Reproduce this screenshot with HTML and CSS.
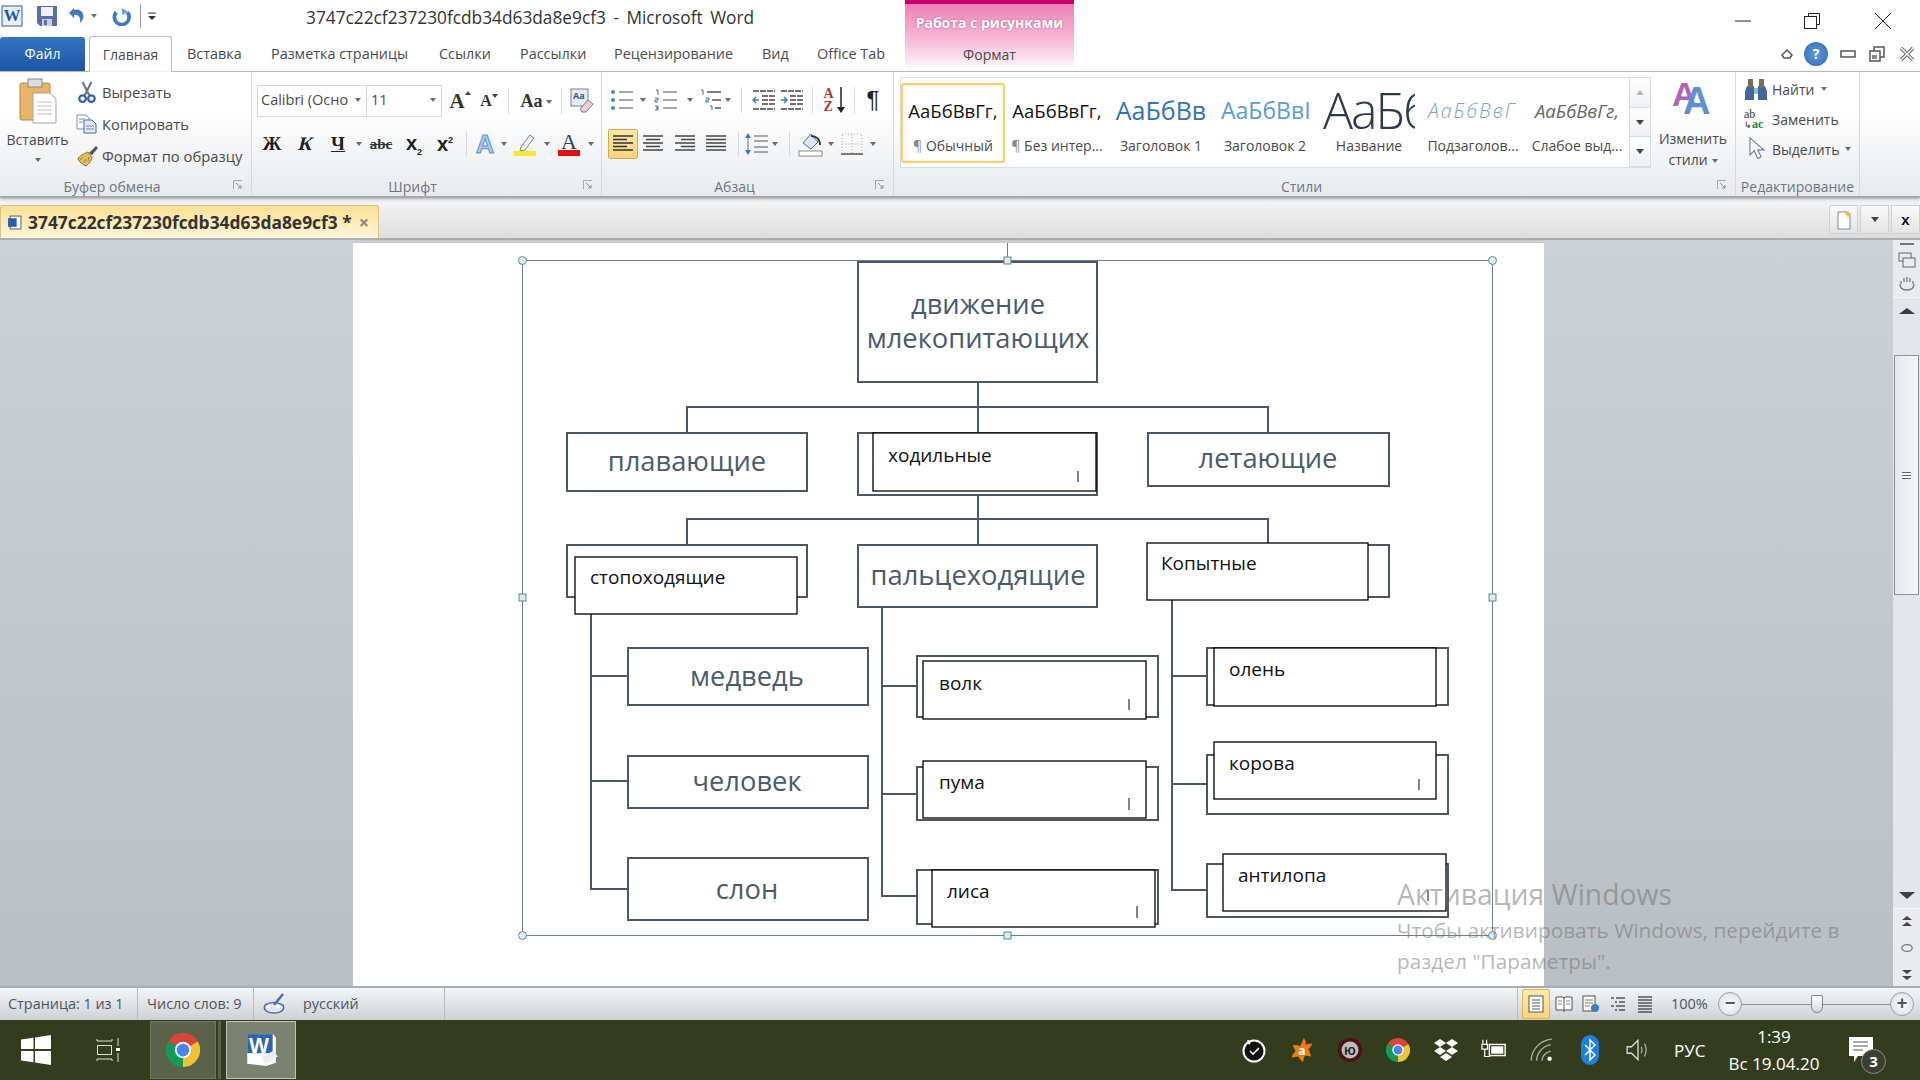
FILE: index.html
```html
<!DOCTYPE html>
<html lang="ru">
  <head>
    <meta charset="utf-8" />
    <title>3747c22cf237230fcdb34d63da8e9cf3 - Microsoft Word</title>
    <link rel="stylesheet" href="styles.css">
  </head>

  <body>
    <svg class="defs" width="0" height="0">
      <symbol id="bullets" viewBox="0 0 24 24"><g stroke="#555" stroke-width="1.2"><path d="M9 4h14M9 12h14M9 20h14"/></g><g fill="#4a86c8"><circle cx="3" cy="4" r="2"/><circle cx="3" cy="12" r="2"/><circle cx="3" cy="20" r="2"/></g></symbol>
      <symbol id="numbers" viewBox="0 0 24 24"><path d="M9 4h14M9 12h14M9 20h14" stroke="#555" stroke-width="1.2"/><path d="M2 2h2v5M1 10h3v2H1v2h3M1 18h3v2H2h2v2H1" stroke="#3b6fb0" fill="none"/></symbol>
      <symbol id="multi" viewBox="0 0 24 24"><path d="M8 4h14M13 12h9M16 20h6" stroke="#555" stroke-width="1.3"/><path d="M2 2h2v5M7 10h3v2H7v2h3M11 18h2v4" stroke="#3b6fb0" fill="none"/></symbol>
      <symbol id="outdent" viewBox="0 0 24 24"><path d="M1 3h22M10 8h13M10 12h13M10 16h13M1 21h22" stroke="#444" stroke-width="1.6" stroke-dasharray="6 1"/><path d="M7 12H1m3-3-3 3 3 3" stroke="#3b78c0" fill="none" stroke-width="1.5"/></symbol>
      <symbol id="indent" viewBox="0 0 24 24"><path d="M1 3h22M10 8h13M10 12h13M10 16h13M1 21h22" stroke="#444" stroke-width="1.6" stroke-dasharray="6 1"/><path d="M1 12h6m-3-3 3 3-3 3" stroke="#3b78c0" fill="none" stroke-width="1.5"/></symbol>
      <symbol id="al-left" viewBox="0 0 22 20"><path d="M1 2h20M1 5.500h14M1 9h20M1 12.500h14M1 16h20" stroke="#333" stroke-width="1.300"/></symbol>
      <symbol id="al-center" viewBox="0 0 22 20"><path d="M1 2h20M4 5.500h14M1 9h20M4 12.500h14M1 16h20" stroke="#444" stroke-width="1.300"/></symbol>
      <symbol id="al-right" viewBox="0 0 22 20"><path d="M1 2h20M7 5.500h14M1 9h20M7 12.500h14M1 16h20" stroke="#444" stroke-width="1.300"/></symbol>
      <symbol id="al-just" viewBox="0 0 22 20"><path d="M1 2h20M1 5.500h20M1 9h20M1 12.500h20M1 16h20" stroke="#444" stroke-width="1.300"/></symbol>
      <symbol id="launcher" viewBox="0 0 10 10"><path d="M.5 9V.5H9" stroke="#a3a8ad" fill="none"/><path d="M3 3l5 5M8 5v3H5" stroke="#8a9096" fill="none"/></symbol>
      <symbol id="chrome" viewBox="-24 -24 48 48"><path d="M0 0-20.800-12A24 24 0 0 1 20.800-12Z" fill="#db4437"/><path d="M0 0-20.800-12A24 24 0 0 1 20.800-12Z" fill="#f2c230" transform="rotate(120)"/><path d="M0 0-20.800-12A24 24 0 0 1 20.800-12Z" fill="#0f9d58" transform="rotate(240)"/><circle r="11.500" fill="#fff"/><circle r="9" fill="#4a84ee"/></symbol>
    </svg>

    <div class="top">
      <div class="top-left">
        <div class="titlebar">
          <svg class="qat-word" viewBox="0 0 22 22"><rect x="1" y="1" width="20" height="20" fill="#e8f0fa" stroke="#2a5ea8"/><text x="11" y="16" class="logo-w">W</text></svg>
          <svg class="qat-save" viewBox="0 0 22 22"><path d="M1 1h20v20H4l-3-3z" fill="#5b6ea8"/><rect x="5" y="2" width="12" height="9" fill="#eef1f7"/><rect x="6" y="14" width="10" height="7" fill="#c7cee0"/><rect x="8" y="15" width="3" height="5" fill="#5b6ea8"/></svg>
          <svg class="qat-undo" viewBox="0 0 18 18"><path d="M6 3C12 1 17 6 15 12c-1 2-2 3-3 4 1-5-1-9-6-8v3L1 6l5-5z" fill="#3f78c4"/></svg>
          <i class="dd dd-undo"></i>
          <svg class="qat-redo" viewBox="0 0 18 18"><path d="M4 5A7 7 0 1 0 14.500 5" fill="none" stroke="#3f78c4" stroke-width="3.500"/><path d="M9 1l6 3-5 4z" fill="#6fa4e0"/></svg>
          <span class="qat-sep"></span>
          <svg class="qat-more" viewBox="0 0 10 10"><path d="M1 2h8" stroke="#333"/><path d="M1 5h8L5 9z" fill="#333"/></svg>
          <span class="doc-title">3747c22cf237230fcdb34d63da8e9cf3 - Microsoft Word</span>
        </div>
        <div class="tabs">
          <span class="tab-file">Файл</span>
          <span class="tab tab-active">Главная</span>
          <span class="tab t-ins">Вставка</span>
          <span class="tab t-lay">Разметка страницы</span>
          <span class="tab t-ref">Ссылки</span>
          <span class="tab t-mail">Рассылки</span>
          <span class="tab t-rev">Рецензирование</span>
          <span class="tab t-view">Вид</span>
          <span class="tab t-office">Office Tab</span>
        </div>
      </div>
      <div class="ctx">
        <div class="ctx-title">Работа с рисунками</div>
        <div class="ctx-tab">Формат</div>
      </div>
      <div class="top-right">
        <div class="win-ctrl">
          <svg class="w-min" viewBox="0 0 16 16"><path d="M0 8h16" stroke="#222"/></svg>
          <svg class="w-max" viewBox="0 0 16 16"><path d="M4.500 3.500V.5h11v11h-3" stroke="#222" fill="none"/><rect x=".5" y="3.500" width="12" height="12" fill="none" stroke="#222"/></svg>
          <svg class="w-close" viewBox="0 0 16 16"><path d="M0 0l16 16M16 0 0 16" stroke="#222"/></svg>
        </div>
        <div class="doc-ctrl">
          <svg class="d-icon" viewBox="0 0 14 14"><path d="M7 3l5 5-2 3H4L2 8z" fill="#fff" stroke="#555" stroke-width="1.500"/></svg>
          <span class="help">?</span>
          <svg class="d-icon d-min" viewBox="0 0 16 14"><rect x="1" y="4" width="14" height="6" fill="#fff" stroke="#555" stroke-width="1.500"/></svg>
          <svg class="d-icon d-rest" viewBox="0 0 16 16"><rect x="5" y="1" width="10" height="10" fill="#fff" stroke="#555" stroke-width="1.500"/><rect x="1" y="5" width="10" height="10" fill="#fff" stroke="#555" stroke-width="1.500"/><rect x="3" y="9" width="5" height="4" fill="#888"/></svg>
          <svg class="d-icon d-close" viewBox="0 0 16 16"><path d="M2 2l12 12M14 2 2 14" stroke="#666" stroke-width="3.500"/><path d="M2 2l12 12M14 2 2 14" stroke="#fff" stroke-width="1.500"/></svg>
        </div>
      </div>
    </div>

    <div class="ribbon">
      <div class="group g-clip">
        <div class="group-body clip-body">
          <div class="paste">
            <svg class="paste-icon" viewBox="0 0 38 46"><rect x="1" y="5" width="30" height="37" rx="2" fill="#e9b562" stroke="#a98a5a"/><rect x="9" y="1" width="14" height="8" fill="#ddd" stroke="#888"/><path d="M14 15h17l6 6v24H14z" fill="#fff" stroke="#9aa3ad"/><path d="M18 24h15M18 28h15M18 32h15M18 36h15" stroke="#b9c0c8"/></svg>
            <span>Вставить</span>
            <i class="dd"></i>
          </div>
          <div class="clip-list">
            <div class="clip-row"><svg viewBox="0 0 16 20"><path d="M4 1l6 12M12 1 6 13" stroke="#6d7784" stroke-width="2"/><circle cx="4" cy="16" r="3" fill="none" stroke="#2d62ae" stroke-width="2"/><circle cx="12" cy="16" r="3" fill="none" stroke="#2d62ae" stroke-width="2"/></svg>Вырезать</div>
            <div class="clip-row"><svg viewBox="0 0 22 20"><path d="M1 1h9l3 3v11H1z" fill="#fff" stroke="#7e8fa8"/><path d="M8 6h8l4 4v9H8z" fill="#dfe9f6" stroke="#3f6fae"/><path d="M3 5h6M3 8h4M10 12h8M10 15h8" stroke="#7a8ba3"/></svg>Копировать</div>
            <div class="clip-row"><svg viewBox="0 0 22 22"><path d="M12 7c-5 2-9 4-10 7 1 3 5 6 8 7 3-2 6-6 6-9z" fill="#e5bd5a" stroke="#8b7234"/><path d="M7 12l-3 3M10 14l-2 4M13 12l-1 4" stroke="#9a7f35"/><path d="M13 8l7-7 2 2-6 7z" fill="#555"/></svg>Формат по образцу</div>
          </div>
        </div>
        <div class="group-label lb-clip">Буфер обмена<svg class="launcher" viewBox="0 0 10 10"><use href="#launcher"/></svg></div>
      </div>

      <div class="group g-font">
        <div class="group-body">
          <div class="row f-row1">
            <div class="combo combo-font">Calibri (Осно<i class="dd"></i></div>
            <div class="combo combo-size">11<i class="dd"></i></div>
            <span class="ico-a ico-a-big">A<i class="up"></i></span>
            <span class="ico-a ico-a-small">A<i class="down"></i></span>
            <span class="rsep"></span>
            <span class="ico-aa">Aa<i class="dd"></i></span>
            <span class="rsep"></span>
            <svg class="ic-26" viewBox="0 0 26 26"><rect x="2" y="1" width="17" height="17" fill="#e3eaf3" stroke="#6f849d"/><text x="4" y="11" class="mini-aa">Aa</text><path d="M11 21l8-9 5 4-7 8h-4z" fill="#f1ccd3" stroke="#6d8098"/></svg>
          </div>
          <div class="row f-row2">
            <b class="fmt-b">Ж</b>
            <b class="fmt-i">К</b>
            <b class="fmt-u">Ч</b>
            <i class="dd"></i>
            <span class="fmt-s">abc</span>
            <span class="fmt-x">x<sub>2</sub></span>
            <span class="fmt-x">x<sup>2</sup></span>
            <span class="rsep"></span>
            <span class="fx-a">A</span>
            <i class="dd"></i>
            <svg class="ic-26" viewBox="0 0 26 26"><path d="M9 16 18 4l4 3-9 12-5 1z" fill="#eee" stroke="#7a8796"/><rect x="2" y="20" width="22" height="5" fill="#f6e82c"/></svg>
            <i class="dd"></i>
            <svg class="ic-26" viewBox="0 0 26 26"><text x="13" y="18" class="color-a">A</text><rect x="2" y="19" width="22" height="6" fill="#e01010"/></svg>
            <i class="dd"></i>
          </div>
        </div>
        <div class="group-label lb-font">Шрифт<svg class="launcher" viewBox="0 0 10 10"><use href="#launcher"/></svg></div>
      </div>

      <div class="group g-para">
        <div class="group-body">
          <div class="row p-row1">
            <svg class="ic-24"><use href="#bullets"/></svg><i class="dd"></i>
            <svg class="ic-24"><use href="#numbers"/></svg><i class="dd"></i>
            <svg class="ic-24"><use href="#multi"/></svg><i class="dd"></i>
            <span class="rsep"></span>
            <svg class="ic-24"><use href="#outdent"/></svg>
            <svg class="ic-24"><use href="#indent"/></svg>
            <span class="rsep"></span>
            <span class="sort"><span>A<br>Z</span><svg viewBox="0 0 8 26"><path d="M4 0v22" stroke="#222" stroke-width="1.500"/><path d="M0 20h8l-4 6z" fill="#222"/></svg></span>
            <span class="rsep"></span>
            <span class="pilcrow">¶</span>
          </div>
          <div class="row p-row2">
            <span class="al-on"><svg class="ic-22"><use href="#al-left"/></svg></span>
            <svg class="ic-22"><use href="#al-center"/></svg>
            <svg class="ic-22"><use href="#al-right"/></svg>
            <svg class="ic-22"><use href="#al-just"/></svg>
            <span class="rsep"></span>
            <svg class="ic-24" viewBox="0 0 24 24"><path d="M10 4h14M10 9h14M10 15h14M10 20h14" stroke="#555" stroke-width="1.200"/><path d="M4 1 1 6h6zM4 23l-3-5h6z" fill="#3b78c0"/><path d="M4 6v12" stroke="#3b78c0"/></svg>
            <i class="dd"></i>
            <span class="rsep"></span>
            <svg class="ic-26" viewBox="0 0 26 26"><path d="M5 12l8-9 7 8-7 7z" fill="#dde6f2" stroke="#3f6fae"/><path d="M13 5c5 0 9 3 9 9" stroke="#333" fill="none" stroke-width="2"/><rect x="1" y="20" width="23" height="5" fill="#fff" stroke="#888"/></svg>
            <i class="dd"></i>
            <svg class="ic-26" viewBox="0 0 26 26"><rect x="3" y="3" width="20" height="20" fill="none" stroke="#aaa" stroke-dasharray="1 2"/><path d="M3 13h20M13 3v20" stroke="#aaa" stroke-dasharray="1 2"/><path d="M2 23h22" stroke="#555" stroke-width="1.500"/></svg>
            <i class="dd"></i>
          </div>
        </div>
        <div class="group-label lb-para">Абзац<svg class="launcher" viewBox="0 0 10 10"><use href="#launcher"/></svg></div>
      </div>

      <div class="group g-styles">
        <div class="group-body styles-body">
          <div class="gallery">
            <div class="style style-on"><div class="sample s-normal">АаБбВвГг,</div><div class="style-name"><em>¶</em> Обычный</div></div>
            <div class="style"><div class="sample s-normal">АаБбВвГг,</div><div class="style-name"><em>¶</em> Без интер...</div></div>
            <div class="style"><div class="sample s-h1">АаБбВв</div><div class="style-name">Заголовок 1</div></div>
            <div class="style"><div class="sample s-h2">АаБбВвІ</div><div class="style-name">Заголовок 2</div></div>
            <div class="style"><div class="sample s-title">АаБбВ</div><div class="style-name">Название</div></div>
            <div class="style"><div class="sample s-sub">АаБбВвГ</div><div class="style-name">Подзаголов...</div></div>
            <div class="style"><div class="sample s-weak">АаБбВвГг,</div><div class="style-name">Слабое выд...</div></div>
            <div class="gal-scroll">
              <span class="gal-btn"><i class="up-dim"></i></span>
              <span class="gal-btn"><i class="dd-dark"></i></span>
              <span class="gal-btn gal-more"><i class="dd-dark"></i></span>
            </div>
          </div>
          <div class="change-styles">
            <svg viewBox="0 0 44 42"><text x="1" y="30" class="big-a1">A</text><text x="12" y="38" class="big-a2">A</text></svg>
            <span>Изменить</span>
            <span>стили<i class="dd"></i></span>
          </div>
        </div>
        <div class="group-label lb-styles">Стили<svg class="launcher" viewBox="0 0 10 10"><use href="#launcher"/></svg></div>
      </div>

      <div class="group g-edit">
        <div class="group-body edit-body">
          <div class="edit-row"><svg viewBox="0 0 24 24"><path d="M3 9h7v14H1V14zM14 9h7l2 5v9h-9z" fill="#41689c"/><rect x="4" y="2" width="5" height="8" fill="#7a6d4f"/><rect x="15" y="2" width="5" height="8" fill="#7a6d4f"/><rect x="10" y="11" width="4" height="6" fill="#9db7d8"/></svg>Найти<i class="dd"></i></div>
          <div class="edit-row"><span class="ab-ac"><span>ab</span><span><em>↳</em><b>ac</b></span></span>Заменить</div>
          <div class="edit-row"><svg class="cursor" viewBox="0 0 24 28"><path d="M5 1v20l5-5 4 9 4-2-4-8h7z" fill="#fff" stroke="#6d7c8f" stroke-width="1.300"/></svg>Выделить<i class="dd"></i></div>
        </div>
        <div class="group-label">Редактирование</div>
      </div>
    </div>

    <div class="docbar">
      <div class="doc-tab">
        <svg viewBox="0 0 14 14"><rect x="3" y="1" width="10" height="12" fill="#fff" stroke="#667"/><rect x="1" y="3" width="8" height="8" fill="#2a5ea8"/></svg>
        <b>3747c22cf237230fcdb34d63da8e9cf3 *</b>
        <span class="doc-tab-x">×</span>
      </div>
      <div class="doc-btns">
        <span class="doc-btn"><svg viewBox="0 0 16 20"><path d="M2 2h9l3 3v14H2z" fill="#fff" stroke="#7b8797"/><path d="M12 0l1 3 3 1-3 1-1 3-1-3-3-1 3-1z" fill="#f2b531"/></svg></span>
        <span class="doc-btn"><i class="dd-dark"></i></span>
        <span class="doc-btn doc-btn-x">x</span>
      </div>
    </div>

    <div class="workspace">
      <div class="page">
        <svg class="diagram" viewBox="353 240 1191 746">
          <path class="conn" d="M978 382V433M687 433V407H1268V433M978 495V545M687 545V519H1268V545"/>
          <path class="conn" d="M591 614V889H627M591 676H627M591 781H627M882 607V896H917M882 686H917M882 794H917M1172 600V890H1207M1172 676H1207M1172 784H1207"/>

          <rect class="bx" x="858" y="262" width="239" height="120"/>
          <rect class="bx" x="567" y="433" width="240" height="58"/>
          <rect class="bx" x="858" y="433" width="239" height="62"/>
          <rect class="bx" x="1148" y="433" width="241" height="53"/>
          <rect class="bx" x="567" y="545" width="240" height="52"/>
          <rect class="bx" x="858" y="545" width="239" height="62"/>
          <rect class="bx" x="1148" y="545" width="241" height="52"/>
          <rect class="bx" x="628" y="648" width="240" height="57"/>
          <rect class="bx" x="628" y="756" width="240" height="52"/>
          <rect class="bx" x="628" y="858" width="240" height="62"/>
          <rect class="bx" x="917" y="656" width="241" height="61"/>
          <rect class="bx" x="917" y="767" width="241" height="53"/>
          <rect class="bx" x="917" y="870" width="241" height="54"/>
          <rect class="bx" x="1207" y="648" width="241" height="57"/>
          <rect class="bx" x="1207" y="755" width="241" height="59"/>
          <rect class="bx" x="1207" y="864" width="241" height="53"/>

          <rect class="ov" x="873" y="433" width="223" height="58"/>
          <rect class="ov" x="575" y="557" width="222" height="57"/>
          <rect class="ov" x="1147" y="543" width="221" height="57"/>
          <rect class="ov" x="923" y="661" width="223" height="58"/>
          <rect class="ov" x="923" y="761" width="223" height="57"/>
          <rect class="ov" x="932" y="870" width="223" height="57"/>
          <rect class="ov" x="1214" y="648" width="222" height="58"/>
          <rect class="ov" x="1214" y="742" width="222" height="57"/>
          <rect class="ov" x="1223" y="854" width="223" height="57"/>

          <path class="caret" d="M1078 471V482M1129 699V710M1129 798V810M1137 906V918M1419 779V790M1428 890V901"/>

          <text class="lbl" x="978" y="314">движение</text>
          <text class="lbl" x="978" y="348">млекопитающих</text>
          <text class="lbl" x="687" y="471">плавающие</text>
          <text class="lbl" x="1268" y="468">летающие</text>
          <text class="lbl" x="978" y="585">пальцеходящие</text>
          <text class="lbl" x="747" y="686">медведь</text>
          <text class="lbl" x="747" y="791">человек</text>
          <text class="lbl" x="747" y="899">слон</text>

          <text class="small" x="888" y="462">ходильные</text>
          <text class="small" x="590" y="584">стопоходящие</text>
          <text class="small" x="1161" y="570">Копытные</text>
          <text class="small" x="939" y="690">волк</text>
          <text class="small" x="939" y="789">пума</text>
          <text class="small" x="947" y="898">лиса</text>
          <text class="small" x="1229" y="676">олень</text>
          <text class="small" x="1229" y="770">корова</text>
          <text class="small" x="1238" y="882">антилопа</text>

          <rect class="frame" x="522.500" y="260.500" width="970" height="675"/>
          <path class="frame" d="M1007.500 243V260"/>
          <circle class="hd" cx="522.500" cy="260.500" r="4"/>
          <circle class="hd" cx="1492.500" cy="260.500" r="4"/>
          <circle class="hd" cx="522.500" cy="935.500" r="4"/>
          <circle class="hd" cx="1492.500" cy="935.500" r="4"/>
          <rect class="hd" x="1004" y="257" width="7" height="7"/>
          <rect class="hd" x="1004" y="932" width="7" height="7"/>
          <rect class="hd" x="519" y="594" width="7" height="7"/>
          <rect class="hd" x="1489" y="594" width="7" height="7"/>
        </svg>
      </div>
      <div class="side-gap"></div>
      <div class="vscroll">
        <div class="vs-tools">
          <span class="vs-split"></span>
          <svg viewBox="0 0 18 16"><rect x="1" y="1" width="12" height="8" fill="#e8ebef" stroke="#666"/><rect x="5" y="6" width="12" height="9" fill="#e8ebef" stroke="#666"/></svg>
          <svg viewBox="0 0 18 16"><path d="M3 9V6m3 1V3m3 4V2m3 5V3m3 6V6M2 9c0 4 3 6 7 6s7-2 7-6" fill="none" stroke="#777" stroke-width="1.300"/></svg>
        </div>
        <i class="vs-up"></i>
        <div class="vs-track"><div class="vs-thumb"><span></span></div></div>
        <i class="vs-down"></i>
        <div class="vs-nav">
          <svg viewBox="0 0 12 12"><path d="M1 5l5-4 5 4zM1 11l5-4 5 4z" fill="#444"/></svg>
          <svg viewBox="0 0 14 10"><ellipse cx="7" cy="5" rx="6" ry="4" fill="none" stroke="#777" stroke-width="1.500"/></svg>
          <svg viewBox="0 0 12 12"><path d="M1 1l5 4 5-4zM1 7l5 4 5-4z" fill="#444"/></svg>
        </div>
      </div>
      <div class="watermark">
        <div class="wm-big">Активация Windows</div>
        <div>Чтобы активировать Windows, перейдите в</div>
        <div>раздел "Параметры".</div>
      </div>
    </div>

    <div class="status">
      <span class="st-item st-page">Страница: 1 из 1</span>
      <span class="st-item st-words">Число слов: 9</span>
      <span class="st-item st-lang">
        <svg viewBox="0 0 26 24"><path d="M3 13c5-3 12-3 18 0 2 4-1 8-9 8S1 17 3 13z" fill="#dfe6f1" stroke="#4a6ea5" stroke-width="1.500"/><path d="M5 15c4-2 10-2 14 0" fill="none" stroke="#fff" stroke-width="2"/><path d="M12 13 21 2" stroke="#4a6ea5" stroke-width="2.500"/></svg>
        русский
      </span>
      <span class="st-fill"></span>
      <div class="st-views">
        <span class="view view-on"><svg viewBox="0 0 16 18"><rect x="1" y="1" width="14" height="16" fill="#fff" stroke="#555"/><path d="M4 5h8M4 8h8M4 11h8M4 14h8" stroke="#555"/></svg></span>
        <span class="view"><svg viewBox="0 0 18 18"><path d="M1 2h7l1 1 1-1h7v13H1zM9 3v14" fill="#fff" stroke="#555"/><path d="M3 6h4M3 9h4M11 6h4M11 9h4" stroke="#888"/></svg></span>
        <span class="view"><svg viewBox="0 0 18 18"><rect x="1" y="1" width="12" height="15" fill="#fff" stroke="#555"/><path d="M3 5h8M3 8h8M3 11h5" stroke="#777"/><circle cx="13" cy="13" r="4" fill="#3d7fc4"/></svg></span>
        <span class="view"><svg viewBox="0 0 18 18"><path d="M2 3h3M7 3h9M6 7h2M10 7h6M2 11h3M7 11h9M6 15h2M10 15h6" stroke="#555" stroke-width="1.500"/></svg></span>
        <span class="view"><svg viewBox="0 0 18 18"><path d="M2 2h14M2 5h14M2 8h14M2 11h14M2 14h14M2 17h14" stroke="#555" stroke-width="1.500"/></svg></span>
      </div>
      <span class="zoom-val">100%</span>
      <span class="zoom-btn">−</span>
      <span class="zoom-track"><i></i></span>
      <span class="zoom-btn">+</span>
    </div>

    <div class="taskbar">
      <svg class="start" viewBox="0 0 30 30"><path d="M0 4.500 12.500 2.800V14H0zM14 2.500 30 0v14H14zM0 16h12.500v11.200L0 25.500zM14 16h16v14l-16-2.500z" fill="#fff"/></svg>
      <svg class="taskview" viewBox="0 0 24 24"><g fill="none" stroke="#ddd"><path d="M1 1v2h15V1M1 23v-2h15v2"/><rect x="1.500" y="7.500" width="14" height="9"/></g><path d="M22 0v8M22 15v9" stroke="#ddd"/><rect x="20" y="10" width="4" height="3" fill="#fff"/></svg>
      <span class="tile tile-chrome"><svg><use href="#chrome"/></svg></span>
      <span class="tile-strip"></span>
      <span class="tile tile-word">
        <svg viewBox="0 0 34 34"><path d="M4 2h24l3 3v24l-9 3-18-2z" fill="#fff"/><path d="M4 2h24v18H4z" fill="#2b64b5"/><text x="15" y="20" class="logo-w2">W</text><path d="M18 24l10-6 5 5-12 8z" fill="#e8edf3"/></svg>
      </span>
      <span class="tb-fill"></span>
      <div class="tray">
        <span class="tr tr1"><svg viewBox="0 0 26 26"><circle cx="13" cy="14" r="10.500" fill="#111" stroke="#fff" stroke-width="2"/><path d="M9 14l3 3 6-6" stroke="#fff" fill="none" stroke-width="1.600"/><path d="M6 3l5 1-3 4z" fill="#fff"/></svg></span>
        <span class="tr tr2"><svg viewBox="0 0 26 28"><path d="M15 1c2 3 2 5 2 7l7-1c-1 3-3 5-4 6l3 8-7-1-2 7c-3-2-4-5-5-6l-7 1c1-4 3-6 4-7L3 9c3-1 6 0 8 1z" fill="#f07c10"/><text x="13" y="19" class="avast">a</text></svg></span>
        <span class="tr tr3"><svg viewBox="0 0 26 26"><circle cx="13" cy="13" r="12" fill="#4c1016"/><circle cx="13" cy="13" r="8.500" fill="#b9bcb7"/><text x="13" y="17.500" class="yu">Ю</text></svg></span>
        <span class="tr tr4"><svg><use href="#chrome"/></svg></span>
        <span class="tr tr5"><svg viewBox="0 0 26 24"><path d="M7 1 1 5l6 4 6-4zM19 1l-6 4 6 4 6-4zM1 13l6 4 6-4-6-4zM25 13l-6 4-6-4 6-4zM13 15l-6 4 6 4 6-4z" fill="#fff"/></svg></span>
        <span class="tr tr6"><svg viewBox="0 0 28 24"><path d="M2 1v5M6 1v5M1 6h6v5H1zM4 11v8h6" stroke="#fff" fill="none" stroke-width="1.300"/><rect x="9" y="6" width="17" height="12" fill="none" stroke="#fff" stroke-width="1.500"/><rect x="11" y="8" width="13" height="8" fill="#fff"/></svg></span>
        <span class="tr tr7"><svg viewBox="0 0 24 24"><g fill="none" stroke="#aeb2a4" stroke-width="1.200"><path d="M2 22C2 12 10 3 21 2M7 22C7 15 13 8 20 7M12 22c0-4 3-8 8-9"/></g><circle cx="19" cy="20" r="2" fill="#fff"/></svg></span>
        <span class="tr tr8"><svg viewBox="0 0 18 30"><rect width="18" height="30" rx="9" fill="#1f7fe0"/><path d="M4 10l10 10-5 5V5l5 5L4 20" stroke="#fff" fill="none" stroke-width="1.500"/></svg></span>
        <span class="tr tr9"><svg viewBox="0 0 24 24"><path d="M2 9h4l6-6v18l-6-6H2z" fill="none" stroke="#ddd" stroke-width="1.200"/><path d="M15 9c1 2 1 4 0 6M18 6c2 4 2 8 0 12" fill="none" stroke="#aeb2a4" stroke-width="1.200"/></svg></span>
        <span class="lang">РУС</span>
        <span class="clock"><span>1:39</span><span>Вс 19.04.20</span></span>
        <span class="notif">
          <svg viewBox="0 0 26 28"><path d="M1 1h24v19H10l-4 6v-6H1z" fill="#fff"/><path d="M5 6h15M5 10h15M5 14h10" stroke="#555"/></svg>
          <span class="badge">3</span>
        </span>
      </div>
    </div>
  </body>
</html>
```

FILE: styles.css
```css
* {
  box-sizing: border-box;
}

html, body {
  margin: 0;
  height: 1080px;
  overflow: hidden;
}

body {
  display: flex;
  flex-direction: column;
  width: 1920px;
  background: #fff;
  color: #4a4a4a;
  font-family: "Open Sans", "Noto Sans", sans-serif;
  font-size: 14px;
}

.defs {
  position: absolute;
}

/* top: title + tabs */
.top {
  display: flex;
  height: 72px;
  flex: none;
}

.top-left {
  width: 905px;
  border-bottom: 1px solid #b9bcc0;
}

.titlebar {
  display: flex;
  align-items: center;
  height: 36px;
}

.qat-word { width: 22px; height: 22px; margin: 0 0 4px 1px; }
.qat-save { width: 22px; height: 22px; margin: 0 0 4px 13px; }
.qat-undo { width: 18px; height: 18px; margin: 0 0 4px 10px; }
.qat-redo { width: 19px; height: 19px; margin: 0 0 4px 15px; }
.qat-more { width: 10px; height: 10px; margin: 0 0 4px 6px; }
.qat-sep { width: 1px; height: 24px; margin: 0 0 4px 9px; background: #999; }
.dd-undo { margin: 0 0 4px 5px; }

.logo-w {
  font: bold 17px "Liberation Serif", serif;
  fill: #1f57a8;
  text-anchor: middle;
}

.doc-title {
  margin: 0 0 0 149px;
  padding-bottom: 2px;
  color: #333;
  font-size: 17.300px;
  word-spacing: 3px;
  white-space: nowrap;
}

.tabs {
  display: flex;
  align-items: flex-end;
  height: 35px;
}

.tab-file {
  width: 85px;
  height: 34px;
  border-radius: 3px 3px 0 0;
  background: linear-gradient(#3474c4, #1d56a3);
  color: #fff;
  line-height: 33px;
  text-align: center;
}

.tab {
  height: 35px;
  font-size: 14.400px;
  line-height: 36px;
  white-space: nowrap;
}

.tab-active {
  width: 83px;
  margin: 0 0 -1px 4px;
  height: 36px;
  border: 1px solid #b9bcc0;
  border-bottom: 1px solid #fff;
  border-radius: 3px 3px 0 0;
  background: #fff;
  font-size: 14px;
  text-align: center;
}

.t-ins { margin-left: 15px; width: 84px; }
.t-lay { width: 168px; }
.t-ref { width: 81px; }
.t-mail { width: 94px; }
.t-rev { width: 148px; }
.t-view { width: 55px; }
.t-office { width: 80px; }

.ctx {
  width: 169px;
  border-bottom: 1px solid #b9bcc0;
  border-top: 4px solid #c8006e;
  background: linear-gradient(#ef7fb4, #f7c3dc 60%, #fff);
  text-align: center;
}

.ctx-title {
  height: 36px;
  padding-top: 9px;
  color: #fff;
  font-size: 14px;
  font-weight: bold;
  text-shadow: 0 0 2px #b0557f;
}

.ctx-tab {
  line-height: 26px;
  padding-top: 2px;
}

.top-right {
  flex: 1;
  border-bottom: 1px solid #b9bcc0;
}

.win-ctrl {
  display: flex;
  align-items: center;
  height: 42px;
}

.w-min { width: 16px; height: 16px; margin-left: 661px; }
.w-max { width: 16px; height: 16px; margin-left: 53px; }
.w-close { width: 16px; height: 16px; margin-left: 55px; }

.doc-ctrl {
  display: flex;
  align-items: center;
  height: 24px;
}

.d-icon { width: 14px; height: 14px; margin-left: 706px; }
.d-min { width: 16px; margin-left: 12px; }
.d-rest { width: 16px; height: 16px; margin-left: 13px; }
.d-close { width: 16px; height: 16px; margin-left: 14px; }

.help {
  flex: none;
  width: 24px;
  height: 24px;
  margin-left: 10px;
  border-radius: 50%;
  background: radial-gradient(#5d9adf, #2f69b5);
  color: #fff;
  font-weight: bold;
  line-height: 24px;
  text-align: center;
}

/* ribbon */
.ribbon {
  display: flex;
  flex: none;
  height: 126px;
  border-bottom: 2px solid #a5a9ae;
  background: linear-gradient(#fff 30%, #e8eaed);
  box-shadow: 0 1px 3px #aaa;
  position: relative;
}

.group {
  display: flex;
  flex-direction: column;
  flex: none;
  border-right: 1px solid #d6d9dd;
}

.g-clip { width: 252px; }
.g-font { width: 350px; }
.g-para { width: 292px; }
.g-styles { width: 842px; }
.g-edit { width: 124px; }

.group-body {
  flex: 1;
  min-height: 0;
  font-size: 14px;
}

.group-label {
  display: flex;
  align-items: flex-end;
  justify-content: center;
  flex: none;
  height: 24px;
  line-height: 19px;
  position: relative;
  color: #6c7682;
}

.lb-clip { padding-right: 27px; }
.lb-font { padding-right: 28px; }
.lb-para { padding-right: 26px; }
.lb-styles { padding-right: 26px; }

.launcher {
  position: absolute;
  right: 8px;
  top: 8px;
  width: 10px;
  height: 10px;
}

.dd {
  display: inline-block;
  width: 0;
  height: 0;
  border-left: 3.500px solid transparent;
  border-right: 3.500px solid transparent;
  border-top: 4px solid #6b6b6b;
}

.dd-dark, .up-dim {
  display: block;
  width: 0;
  height: 0;
  border-left: 4px solid transparent;
  border-right: 4px solid transparent;
  border-top: 5px solid #444;
}

.up-dim {
  border-top: 0;
  border-bottom: 5px solid #bbb;
}

.clip-body {
  display: flex;
}

.paste {
  display: flex;
  flex-direction: column;
  align-items: center;
  width: 76px;
  padding: 6px 1px 0 0;
}

.paste-icon {
  flex: none;
  width: 38px;
  height: 46px;
  margin-bottom: 6px;
}

.paste .dd {
  margin-top: 9px;
}

.clip-list {
  padding-top: 4px;
}

.clip-row {
  display: flex;
  align-items: center;
  height: 32px;
  font-size: 14.800px;
  white-space: nowrap;
}

.clip-row svg {
  width: 22px;
  height: 22px;
  margin-right: 4px;
}

.row {
  display: grid;
  align-items: center;
  justify-items: center;
}

.rsep {
  width: 1px;
  height: 26px;
  background: #d8dbdf;
}

.f-row1 {
  grid-template-columns: 110px 75px 30px 28px 16px 40px 10px 32px;
  height: 32px;
  margin: 13px 0 0 5px;
}

.f-row2 {
  grid-template-columns: 34px 33px 32px 10px 34px 32px 30px 12px 26px 12px 30px 14px 30px 14px;
  height: 32px;
  margin: 11px 0 0 3px;
}

.combo {
  display: flex;
  align-items: center;
  justify-content: space-between;
  width: 100%;
  height: 32px;
  padding: 0 5px 3px 3px;
  border: 1px solid #d5d8dc;
  background: #fff;
  font-size: 14.500px;
  white-space: nowrap;
}

.combo-size {
  border-left: 0;
  padding-left: 4px;
}

.ico-a {
  position: relative;
  color: #333;
  font: bold 21px "Liberation Serif", serif;
}

.ico-a-small { font-size: 16px; }

.up, .down {
  position: absolute;
  left: 100%;
  top: 2px;
  width: 0;
  height: 0;
  border-left: 3px solid transparent;
  border-right: 3px solid transparent;
  border-bottom: 4px solid #444;
}

.down {
  border-bottom: 0;
  border-top: 4px solid #444;
}

.ico-aa {
  color: #333;
  font: bold 18px "Liberation Serif", serif;
  white-space: nowrap;
}

.ico-aa .dd { margin: 0 0 3px 3px; }

.ic-26 { width: 26px; height: 26px; }
.ic-24 { width: 24px; height: 24px; }
.ic-22 { width: 22px; height: 20px; }

.mini-aa {
  font: bold 9px "Open Sans", sans-serif;
  fill: #3b5a80;
}

.fmt-b, .fmt-i, .fmt-u {
  color: #222;
  font: bold 19px "Liberation Serif", serif;
}

.fmt-i { transform: skewX(-14deg); }
.fmt-u { text-decoration: underline; }

.fmt-s {
  color: #333;
  font: bold 15px "Liberation Serif", serif;
  text-decoration: line-through;
}

.fmt-x {
  color: #222;
  font: bold 20px "Liberation Sans", sans-serif;
}

.fmt-x sub, .fmt-x sup {
  font-size: 9px;
}

.fx-a {
  color: #a9cdf0;
  font: bold 25px "Liberation Sans", sans-serif;
  -webkit-text-stroke: 1px #5a93d0;
}

.color-a {
  font: 22px "Liberation Serif", serif;
  fill: #2d4468;
  text-anchor: middle;
}

.p-row1 {
  grid-template-columns: 30px 12px 34px 14px 28px 6px 20px 26px 30px 10px 34px 6px 32px;
  height: 32px;
  margin: 12px 0 0 5px;
}

.p-row2 {
  grid-template-columns: 30px 30px 33px 30px 14px 22px 16px 12px 32px 8px 34px 8px;
  height: 30px;
  margin: 13px 0 0 6px;
}

.al-on {
  display: flex;
  align-items: center;
  justify-content: center;
  width: 30px;
  height: 30px;
  border: 1px solid #d3a94f;
  border-radius: 2px;
  background: linear-gradient(#fde9a8, #fbd379);
}

.sort {
  display: flex;
  align-items: flex-start;
  color: #b3372f;
  font: bold 14px/13px "Liberation Serif", serif;
}

.sort svg {
  width: 8px;
  height: 26px;
  margin-left: 3px;
}

.pilcrow {
  color: #222;
  font: 24px "Liberation Sans", sans-serif;
}

.styles-body {
  display: flex;
  padding-top: 5px;
}

.gallery {
  display: flex;
  width: 751px;
  height: 91px;
  margin-left: 6px;
  border: 1px solid #d9dce0;
  background: #fff;
  padding-top: 5px;
}

.style {
  width: 104px;
  flex: none;
  height: 80px;
  text-align: center;
  overflow: hidden;
}

.style-on {
  border: 2px solid #f4cf6d;
  border-radius: 3px;
  box-shadow: inset 0 0 3px #fbe6ae;
}

.sample {
  display: flex;
  align-items: center;
  justify-content: center;
  height: 50px;
  color: #111;
  white-space: nowrap;
  overflow: hidden;
}

.style:not(.style-on) .sample { margin-top: 2px; }

.s-normal { font-size: 18.500px; }
.s-h1 { color: #2e74b5; font-size: 25px; }
.s-h2 { color: #5b9bd5; font-size: 23px; justify-content: flex-start; padding-left: 8px; }
.s-title { color: #2d3a4b; font-size: 50px; font-weight: 300; letter-spacing: -2px; justify-content: flex-start; margin: 0 6px; }
.s-sub { color: #7ea4c0; font-size: 19.500px; font-style: italic; font-weight: 300; letter-spacing: 2px; justify-content: flex-start; padding-left: 7px; }
.s-weak { color: #666; font-size: 18.500px; font-style: italic; }

.style-name {
  font-size: 14px;
  line-height: 20px;
  margin-top: 1px;
  white-space: nowrap;
}

.style-name em {
  color: #888;
  font-style: normal;
}

.gal-scroll {
  display: flex;
  flex-direction: column;
  flex: 1;
  margin: -5px 0 0 0;
}

.gal-btn {
  display: flex;
  align-items: center;
  justify-content: center;
  flex: 1;
  border-left: 1px solid #d9dce0;
  border-bottom: 1px solid #d9dce0;
  background: linear-gradient(#fff, #eef0f3);
}

.change-styles {
  display: flex;
  flex-direction: column;
  align-items: center;
  width: 84px;
  line-height: 21px;
  white-space: nowrap;
}

.change-styles svg {
  flex: none;
  width: 44px;
  height: 42px;
  margin: -1px 0 10px;
}

.change-styles .dd { margin: 0 0 2px 4px; }

.big-a1 {
  font: bold 34px "Liberation Sans", sans-serif;
  fill: #b062b8;
}

.big-a2 {
  font: bold 38px "Liberation Sans", sans-serif;
  fill: #5b90d2;
}

.edit-body {
  padding: 2px 0 0 8px;
}

.edit-row {
  display: flex;
  align-items: center;
  height: 30px;
  white-space: nowrap;
}

.edit-row svg {
  width: 24px;
  height: 24px;
  margin-right: 4px;
}

.edit-row .dd { margin-left: 6px; }

.ab-ac {
  display: flex;
  flex-direction: column;
  width: 24px;
  margin-right: 4px;
  color: #333;
  font: 12px/10px "Liberation Serif", serif;
}

.ab-ac em {
  font-style: normal;
  font-size: 9px;
}

.ab-ac b { color: #2a7d2e; }

/* doc tab strip */
.docbar {
  display: flex;
  justify-content: space-between;
  flex: none;
  height: 42px;
  padding-top: 7px;
  border-bottom: 2px solid #a9adb1;
  background: linear-gradient(#f5f5f5, #dedede);
}

.doc-tab {
  display: flex;
  align-items: center;
  width: 379px;
  height: 33px;
  padding-left: 6px;
  border: 1px solid #d8c486;
  border-bottom: 0;
  border-radius: 3px 3px 0 0;
  background: linear-gradient(#fbdf92, #fff6d9);
  color: #333;
  font-size: 17.400px;
  white-space: nowrap;
}

.doc-tab svg {
  flex: none;
  width: 15px;
  height: 15px;
  margin-right: 6px;
}

.doc-tab-x {
  margin-left: 7px;
  color: #888;
  font-size: 18px;
  font-weight: bold;
}

.doc-btns {
  display: flex;
  gap: 2px;
}

.doc-btn {
  display: flex;
  align-items: center;
  justify-content: center;
  width: 29px;
  height: 29px;
  border: 1px solid #d0d0d0;
  background: linear-gradient(#fafafa, #e4e4e4);
}

.doc-btn svg {
  width: 16px;
  height: 20px;
}

.doc-btn-x {
  color: #111;
  font: bold 15px "Liberation Sans", sans-serif;
}

/* document area */
.workspace {
  display: flex;
  flex: 1;
  min-height: 0;
  position: relative;
  background: linear-gradient(#ccd1d6, #babfc4);
  border-bottom: 2px solid #a9adb1;
}

.page {
  width: 1191px;
  margin-left: 353px;
  background: linear-gradient(#c9cdd1 3px, #fff 3px);
}

.side-gap {
  flex: 1;
}

.diagram {
  display: block;
  width: 1191px;
  height: 746px;
}

.conn {
  fill: none;
  stroke: #4a5768;
  stroke-width: 2;
}

.bx {
  fill: #fff;
  stroke: #4a5768;
  stroke-width: 2;
}

.ov {
  fill: #fff;
  stroke: #000;
  stroke-width: 1.300;
}

.caret {
  stroke: #333;
  stroke-width: 1.200;
}

.lbl {
  fill: #4a5a6e;
  font: 27.300px "Open Sans", sans-serif;
  text-anchor: middle;
}

.small {
  fill: #111;
  font: 19px "Open Sans", sans-serif;
}

.frame {
  fill: none;
  stroke: #6a8291;
}

.hd {
  fill: #d8edf3;
  stroke: #6a8291;
}

.watermark {
  position: absolute;
  left: 1397px;
  top: 634px;
  color: rgba(110, 110, 110, 0.5);
  font-size: 20.800px;
  line-height: 31px;
  white-space: nowrap;
}

.wm-big {
  font-size: 28.300px;
  line-height: 41px;
}

.vscroll {
  display: flex;
  flex-direction: column;
  align-items: center;
  width: 27px;
  background: #e3e6eb;
}

.vs-tools {
  display: flex;
  flex: none;
  flex-direction: column;
  align-items: center;
  gap: 7px;
  width: 100%;
  height: 58px;
  padding-top: 3px;
  border-bottom: 1px solid #f4f5f6;
  background: #e9ebee;
}

.vs-tools svg {
  flex: none;
  width: 18px;
  height: 16px;
}

.vs-split {
  width: 14px;
  height: 2px;
  background: #777;
}

.vs-up, .vs-down {
  flex: none;
  width: 0;
  height: 0;
  margin-top: 10px;
  border-left: 8px solid transparent;
  border-right: 8px solid transparent;
  border-bottom: 6px solid #3b3f44;
}

.vs-down {
  margin: 0 0 9px;
  border-bottom: 0;
  border-top: 7px solid #3b3f44;
}

.vs-track {
  flex: 1;
  min-height: 0;
  width: 100%;
  padding: 41px 0 0 1px;
}

.vs-thumb {
  display: flex;
  align-items: center;
  justify-content: center;
  width: 25px;
  height: 240px;
  border: 1px solid #8c9198;
  background: linear-gradient(90deg, #e4e8ee, #f5f6f8);
}

.vs-thumb span {
  width: 9px;
  height: 7px;
  border-top: 1px solid #666;
  border-bottom: 1px solid #666;
  background: linear-gradient(#fff 40%, #666 40%, #666 60%, #fff 60%);
}

.vs-nav {
  display: flex;
  flex: none;
  flex-direction: column;
  align-items: center;
  gap: 15px;
  width: 100%;
  height: 78px;
  padding-top: 6px;
  border-top: 1px solid #f4f5f6;
  background: #e9ebee;
}

.vs-nav svg {
  flex: none;
  width: 12px;
  height: 12px;
}

/* status bar */
.status {
  display: flex;
  align-items: center;
  flex: none;
  height: 32px;
  background: linear-gradient(#f4f5f7, #cdd1d6);
  color: #4d5560;
}

.st-item {
  display: flex;
  align-items: center;
  height: 100%;
  padding-bottom: 1px;
  border-right: 1px solid #b8bcc1;
  font-size: 14.400px;
  white-space: nowrap;
}

.st-page { width: 138px; padding-left: 8px; }
.st-words { width: 116px; padding-left: 9px; }
.st-lang { width: 191px; padding-left: 8px; }

.st-lang svg {
  width: 26px;
  height: 24px;
  margin-right: 15px;
}

.st-fill {
  flex: 1;
}

.st-views {
  display: flex;
  align-items: center;
  height: 100%;
  padding-left: 4px;
  border-left: 1px solid #b8bcc1;
}

.view {
  display: flex;
  align-items: center;
  justify-content: center;
  width: 27px;
  height: 30px;
}

.view svg {
  width: 18px;
  height: 18px;
}

.view-on {
  width: 28px;
  border: 1px solid #d9b45c;
  border-radius: 2px;
  background: linear-gradient(#fde9a8, #fbd379);
}

.zoom-val {
  width: 39px;
  margin-left: 13px;
  padding-bottom: 1px;
  font-size: 14.500px;
  white-space: nowrap;
}

.zoom-btn {
  flex: none;
  width: 24px;
  height: 24px;
  margin-left: 8px;
  border: 1px solid #9ba1a8;
  border-radius: 50%;
  background: radial-gradient(#fff, #d5d9de);
  color: #555;
  font: bold 18px/21px "Liberation Sans", sans-serif;
  text-align: center;
}

.zoom-track {
  display: block;
  flex: none;
  width: 148px;
  height: 1px;
  position: relative;
  background: #8b9199;
}

.zoom-track i {
  position: absolute;
  left: 69px;
  top: -9px;
  width: 12px;
  height: 18px;
  border: 1px solid #7f858c;
  border-radius: 2px 2px 6px 6px;
  background: linear-gradient(#fff, #d5d9de);
}

.status .zoom-btn:last-child {
  margin: 0 6px 0 0;
}

/* taskbar */
.taskbar {
  display: flex;
  align-items: center;
  flex: none;
  height: 60px;
  background: #333d1d;
  color: #fff;
}

.start {
  width: 30px;
  height: 30px;
  margin-left: 21px;
}

.taskview {
  width: 24px;
  height: 24px;
  margin-left: 45px;
}

.tile {
  display: flex;
  align-items: center;
  justify-content: center;
  height: 58px;
}

.tile-chrome {
  width: 66px;
  margin-left: 30px;
  border: 1px solid #70765d;
  background: #5b624a;
}

.tile-chrome svg {
  width: 34px;
  height: 34px;
}

.tile-strip {
  width: 3px;
  height: 58px;
  margin: 0 5px 0 2px;
  background: #5b624a;
}

.tile-word {
  width: 70px;
  border: 1px solid #bfc3b7;
  background: #7c8270;
}

.tile-word svg {
  width: 36px;
  height: 36px;
}

.logo-w2 {
  font: bold 20px "Liberation Sans", sans-serif;
  fill: #fff;
  text-anchor: middle;
}

.tb-fill {
  flex: 1;
}

.tray {
  display: flex;
  align-items: center;
  height: 100%;
}

.tr {
  display: flex;
  align-items: center;
  justify-content: center;
  width: 48px;
}

.tr svg {
  width: 26px;
  height: 26px;
}

.tr4 svg {
  width: 24px;
  height: 24px;
}

.tr8 svg {
  width: 18px;
  height: 30px;
}

.avast {
  font: bold 13px "Open Sans", sans-serif;
  fill: #fff;
  text-anchor: middle;
}

.yu {
  font: bold 11px "Open Sans", sans-serif;
  fill: #222;
  text-anchor: middle;
}

.lang {
  width: 48px;
  margin-left: 12px;
  font-size: 17px;
}

.clock {
  display: flex;
  flex-direction: column;
  align-items: center;
  width: 92px;
  margin-left: 6px;
  font-size: 17px;
  line-height: 27px;
  white-space: nowrap;
}

.notif {
  display: block;
  flex: none;
  width: 34px;
  height: 38px;
  margin: 0 38px 0 28px;
  position: relative;
}

.notif svg {
  display: block;
  width: 26px;
  height: 28px;
  margin-top: 5px;
}

.badge {
  position: absolute;
  left: 13px;
  top: 18px;
  width: 25px;
  height: 25px;
  border: 1px solid #888;
  border-radius: 50%;
  background: #3b3f32;
  font-size: 15px;
  font-weight: bold;
  line-height: 23px;
  text-align: center;
}
```
